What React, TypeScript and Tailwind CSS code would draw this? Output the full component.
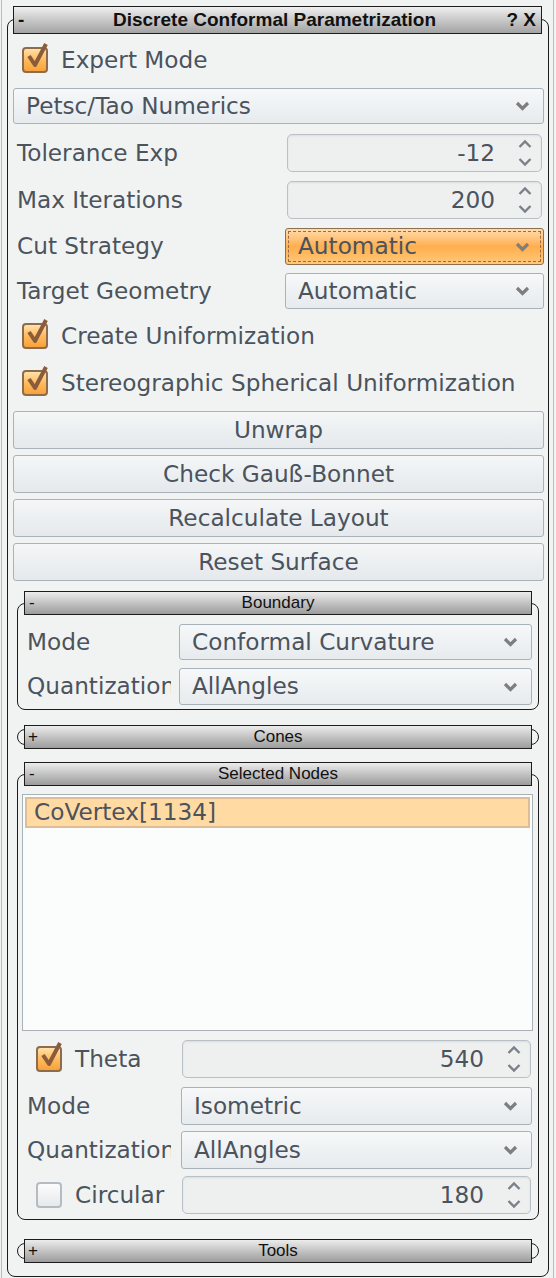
import React from 'react'

const headerBar =
  'h-[24px] border border-[#1c1c1c] bg-gradient-to-b from-[#ececec] to-[#9c9c9c] flex items-center font-["Liberation_Sans",Arial,sans-serif] text-[17px] text-[#111]'

function Check({ checked }: { checked: boolean }) {
  return (
    <div className="relative w-[26px] h-[26px] shrink-0">
      <div
        className={
          checked
            ? 'w-[26px] h-[26px] rounded-[4px] border-2 border-[#8e6b4d] bg-gradient-to-b from-[#ffe2a8] via-[#ffbb5c] to-[#f7a23a]'
            : 'w-[26px] h-[26px] rounded-[4px] border-2 border-[#b4bcc2] bg-gradient-to-b from-[#fbfcfc] to-[#e6eaec]'
        }
      />
      {checked && (
        <svg className="absolute left-[2px] top-[-6px]" width="28" height="30" viewBox="0 0 28 30">
          <path d="M5 15 L11 24 L22 3" fill="none" stroke="#8b5c3c" strokeWidth="4" strokeLinejoin="round" />
        </svg>
      )}
    </div>
  )
}

function Chevron() {
  return (
    <svg width="15" height="10" viewBox="0 0 15 10" className="shrink-0">
      <path d="M2 2 L7.5 7.5 L13 2" fill="none" stroke="#7e7e7e" strokeWidth="3.2" />
    </svg>
  )
}

function Dropdown({ value, className = '', focused = false }: { value: string; className?: string; focused?: boolean }) {
  if (focused) {
    return (
      <div className={'rounded-[3px] border border-[#8b6f52] bg-gradient-to-b from-[#ffdcaa] via-[#ffae4e] to-[#ffc878] p-[2px] ' + className}>
        <div className="h-full border border-dashed border-[#9a6c45] flex items-center pl-[9px] pr-[10px]">
          <span className="flex-1">{value}</span>
          <Chevron />
        </div>
      </div>
    )
  }
  return (
    <div className={'rounded-[3px] border border-[#a8b2ba] bg-gradient-to-b from-[#f6f8f9] to-[#e7ebee] flex items-center pl-[12px] pr-[13px] ' + className}>
      <span className="flex-1 whitespace-nowrap">{value}</span>
      <Chevron />
    </div>
  )
}

function Spinner({ value, className = '' }: { value: string; className?: string }) {
  return (
    <div className={'rounded-[5px] border border-[#bac1c6] bg-[#eef0f0] shadow-[inset_0_1px_2px_rgba(0,0,0,0.08)] flex items-center pr-[8px] ' + className}>
      <span className="flex-1 text-right pr-[22px]">{value}</span>
      <svg width="16" height="32" viewBox="0 0 16 32" className="shrink-0">
        <path d="M2.5 10 L8 4.5 L13.5 10" fill="none" stroke="#7a8188" strokeWidth="2.4" />
        <path d="M2.5 22 L8 27.5 L13.5 22" fill="none" stroke="#7a8188" strokeWidth="2.4" />
      </svg>
    </div>
  )
}

function Button({ label }: { label: string }) {
  return (
    <div className="h-[38px] rounded-[3px] border border-[#a9b2b9] bg-gradient-to-b from-[#f4f6f7] to-[#e5e9ec] flex items-center justify-center">
      {label}
    </div>
  )
}

function Group({ title, open, children, className = '' }: { title: string; open: boolean; children?: React.ReactNode; className?: string }) {
  if (!open) {
    return (
      <div className={'ml-[4px] mr-[5px] border border-[#1c1c1c] rounded-[8px] ' + className}>
        <div className={headerBar + ' -my-[5px] mx-[6px] relative'}>
          <span className="w-[20px] pl-[3px]">+</span>
          <span className="flex-1 text-center pr-[20px]">{title}</span>
        </div>
      </div>
    )
  }
  return (
    <div className={'ml-[4px] mr-[5px] border border-[#1c1c1c] rounded-[8px] flex flex-col ' + className}>
      <div className={headerBar + ' -mt-[13px] mx-[6px]'}>
        <span className="w-[20px] pl-[4px]">-</span>
        <span className="flex-1 text-center pr-[20px]">{title}</span>
      </div>
      {children}
    </div>
  )
}

export default function App() {
  return (
    <div className="w-[556px] h-[1278px] bg-[#f1f3f2] overflow-hidden font-['DejaVu_Sans',sans-serif] text-[23.2px] text-[#4b535d]">
      <div className="ml-[1px] mr-[2px] h-full border-x border-[#b9bdbf] pt-[19px]">
        <div className="ml-[5px] w-[542px] h-[1258px] border border-[#1c1c1c] rounded-[8px] flex flex-col">
          <div className="-mt-[14px] ml-[5px] mr-[6px] h-[28px] border border-[#1c1c1c] bg-gradient-to-b from-[#efefef] to-[#a3a3a3] flex items-center font-['Liberation_Sans',Arial,sans-serif] font-bold text-[19px] text-[#111]">
            <span className="w-[60px] pl-[4px]">-</span>
            <span className="flex-1 text-center pr-[6px]">Discrete Conformal Parametrization</span>
            <span className="w-[60px] text-right pr-[5px]">? X</span>
          </div>

          <div className="flex flex-col pl-[5px] pr-[4px]">
            <div className="mt-[4px] h-[44px] flex items-center pl-[9px] gap-[13px]">
              <Check checked />
              <span>Expert Mode</span>
            </div>
            <Dropdown value="Petsc/Tao Numerics" className="mt-[6px] h-[36px]" />

            <div className="mt-[10px] h-[38px] flex items-center">
              <span className="flex-1 pl-[4px]">Tolerance Exp</span>
              <Spinner value="-12" className="w-[255px] h-full mr-[2px]" />
            </div>
            <div className="mt-[9px] h-[38px] flex items-center">
              <span className="flex-1 pl-[4px]">Max Iterations</span>
              <Spinner value="200" className="w-[255px] h-full mr-[2px]" />
            </div>
            <div className="mt-[9px] h-[37px] flex items-center">
              <span className="flex-1 pl-[4px]">Cut Strategy</span>
              <Dropdown value="Automatic" focused className="w-[259px] h-full" />
            </div>
            <div className="mt-[8px] h-[36px] flex items-center">
              <span className="flex-1 pl-[4px]">Target Geometry</span>
              <Dropdown value="Automatic" className="w-[259px] h-full" />
            </div>

            <div className="mt-[4px] h-[46px] flex items-center pl-[9px] gap-[13px]">
              <Check checked />
              <span>Create Uniformization</span>
            </div>
            <div className="mt-[1px] h-[46px] flex items-center pl-[9px] gap-[13px]">
              <Check checked />
              <span className="whitespace-nowrap">Stereographic Spherical Uniformization</span>
            </div>

            <div className="mt-[5px] flex flex-col gap-[6px]">
              <Button label="Unwrap" />
              <Button label="Check Gauß-Bonnet" />
              <Button label="Recalculate Layout" />
              <Button label="Reset Surface" />
            </div>

            <Group title="Boundary" open className="mt-[22px]">
              <div className="mt-[9px] h-[36px] flex items-center pl-[9px] pr-[6px]">
                <span className="w-[144px] mr-[8px] overflow-hidden whitespace-nowrap">Mode</span>
                <Dropdown value="Conformal Curvature" className="flex-1 h-full" />
              </div>
              <div className="mt-[8px] mb-[4px] h-[37px] flex items-center pl-[9px] pr-[6px]">
                <span className="w-[144px] mr-[8px] overflow-hidden whitespace-nowrap">Quantization</span>
                <Dropdown value="AllAngles" className="flex-1 h-full" />
              </div>
            </Group>

            <Group title="Cones" open={false} className="mt-[19px]" />

            <Group title="Selected Nodes" open className="mt-[29px]">
              <div className="mt-[8px] ml-[4px] mr-[5px] h-[237px] border border-[#a9b1b6] bg-[#fbfcfc] p-[2px]">
                <div className="h-[31px] border-2 border-[#dcbd96] bg-[#ffdba3] flex items-center pl-[7px]">CoVertex[1134]</div>
              </div>
              <div className="mt-[9px] h-[38px] flex items-center pl-[18px] pr-[7px]">
                <div className="w-[146px] flex items-center gap-[13px]">
                  <Check checked />
                  <span>Theta</span>
                </div>
                <Spinner value="540" className="flex-1 h-full" />
              </div>
              <div className="mt-[9px] h-[38px] flex items-center pl-[9px] pr-[6px]">
                <span className="w-[144px] mr-[10px] overflow-hidden whitespace-nowrap">Mode</span>
                <Dropdown value="Isometric" className="flex-1 h-full" />
              </div>
              <div className="mt-[6px] h-[38px] flex items-center pl-[9px] pr-[6px]">
                <span className="w-[144px] mr-[10px] overflow-hidden whitespace-nowrap">Quantization</span>
                <Dropdown value="AllAngles" className="flex-1 h-full" />
              </div>
              <div className="mt-[7px] mb-[5px] h-[38px] flex items-center pl-[18px] pr-[7px]">
                <div className="w-[146px] flex items-center gap-[13px]">
                  <Check checked={false} />
                  <span>Circular</span>
                </div>
                <Spinner value="180" className="flex-1 h-full" />
              </div>
            </Group>

            <Group title="Tools" open={false} className="mt-[23px]" />
          </div>
        </div>
      </div>
    </div>
  )
}
